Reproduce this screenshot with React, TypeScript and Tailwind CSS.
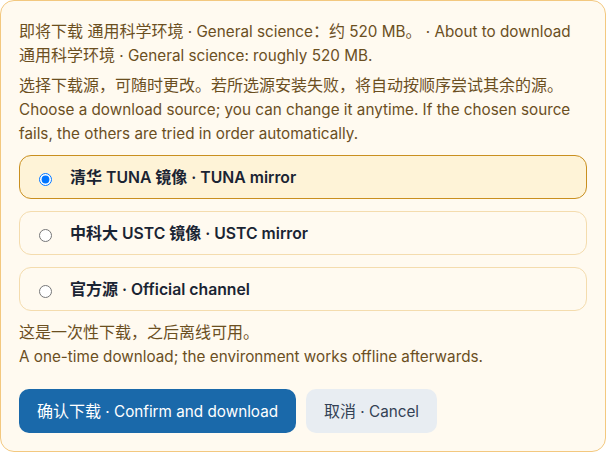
const Zh = ({ children }: { children: string }) => <span className="text-[16px] leading-none">{children}</span>;

const sources = [
  { id: "tuna", zh: "清华", mid: " TUNA ", zh2: "镜像", en: " · TUNA mirror", selected: true },
  { id: "ustc", zh: "中科大", mid: " USTC ", zh2: "镜像", en: " · USTC mirror", selected: false },
  { id: "official", zh: "官方源", mid: "", zh2: "", en: " · Official channel", selected: false },
];

export default function App() {
  return (
    <div className="h-[452px] w-[606px] rounded-[14px] border border-[#f3c87f] bg-[#fffaf0] px-[18px] pt-[19px] font-['Inter','Noto_Sans_CJK_SC',sans-serif] text-[15.25px] leading-6 text-[#6b4f1f]">
      <p>
        <Zh>即将下载 通用科学环境</Zh> · General science<Zh>：约</Zh> 520 MB<Zh>。</Zh> · About to download
        <br />
        <Zh>通用科学环境</Zh> · General science: roughly 520 MB.
      </p>
      <p className="mt-1.5">
        <Zh>选择下载源，可随时更改。若所选源安装失败，将自动按顺序尝试其余的源。</Zh>
        <br />
        Choose a download source; you can change it anytime. If the chosen source fails, the others are tried in order automatically.
      </p>
      <div className="mt-[9px] flex flex-col gap-3">
        {sources.map((s) => (
          <label
            key={s.id}
            className={
              s.selected
                ? "flex h-11 items-center gap-[18px] rounded-xl border border-[#c98f1f] bg-[#fef3d7] px-[19px]"
                : "flex h-11 items-center gap-[18px] rounded-xl border border-[#f4dcae] px-[19px]"
            }
          >
            <input type="radio" name="source" defaultChecked={s.selected} className="m-0 mt-[4px] size-[13px] accent-[#0075ff]" />
            <span className="pt-[2px] text-[15.75px] font-semibold text-[#1a2433]">
              <Zh>{s.zh}</Zh>
              {s.mid}
              {s.zh2 && <Zh>{s.zh2}</Zh>}
              {s.en}
            </span>
          </label>
        ))}
      </div>
      <p className="mt-2.5">
        <Zh>这是一次性下载，之后离线可用。</Zh>
        <br />
        A one-time download; the environment works offline afterwards.
      </p>
      <div className="mt-5 flex gap-2.5">
        <button type="button" className="h-11 rounded-[10px] bg-[#1a69aa] px-[18px] pt-px text-white">
          <Zh>确认下载</Zh> · Confirm and download
        </button>
        <button type="button" className="h-11 rounded-[10px] bg-[#e8edf2] px-[18px] pt-px text-[#334155]">
          <Zh>取消</Zh> · Cancel
        </button>
      </div>
    </div>
  );
}
